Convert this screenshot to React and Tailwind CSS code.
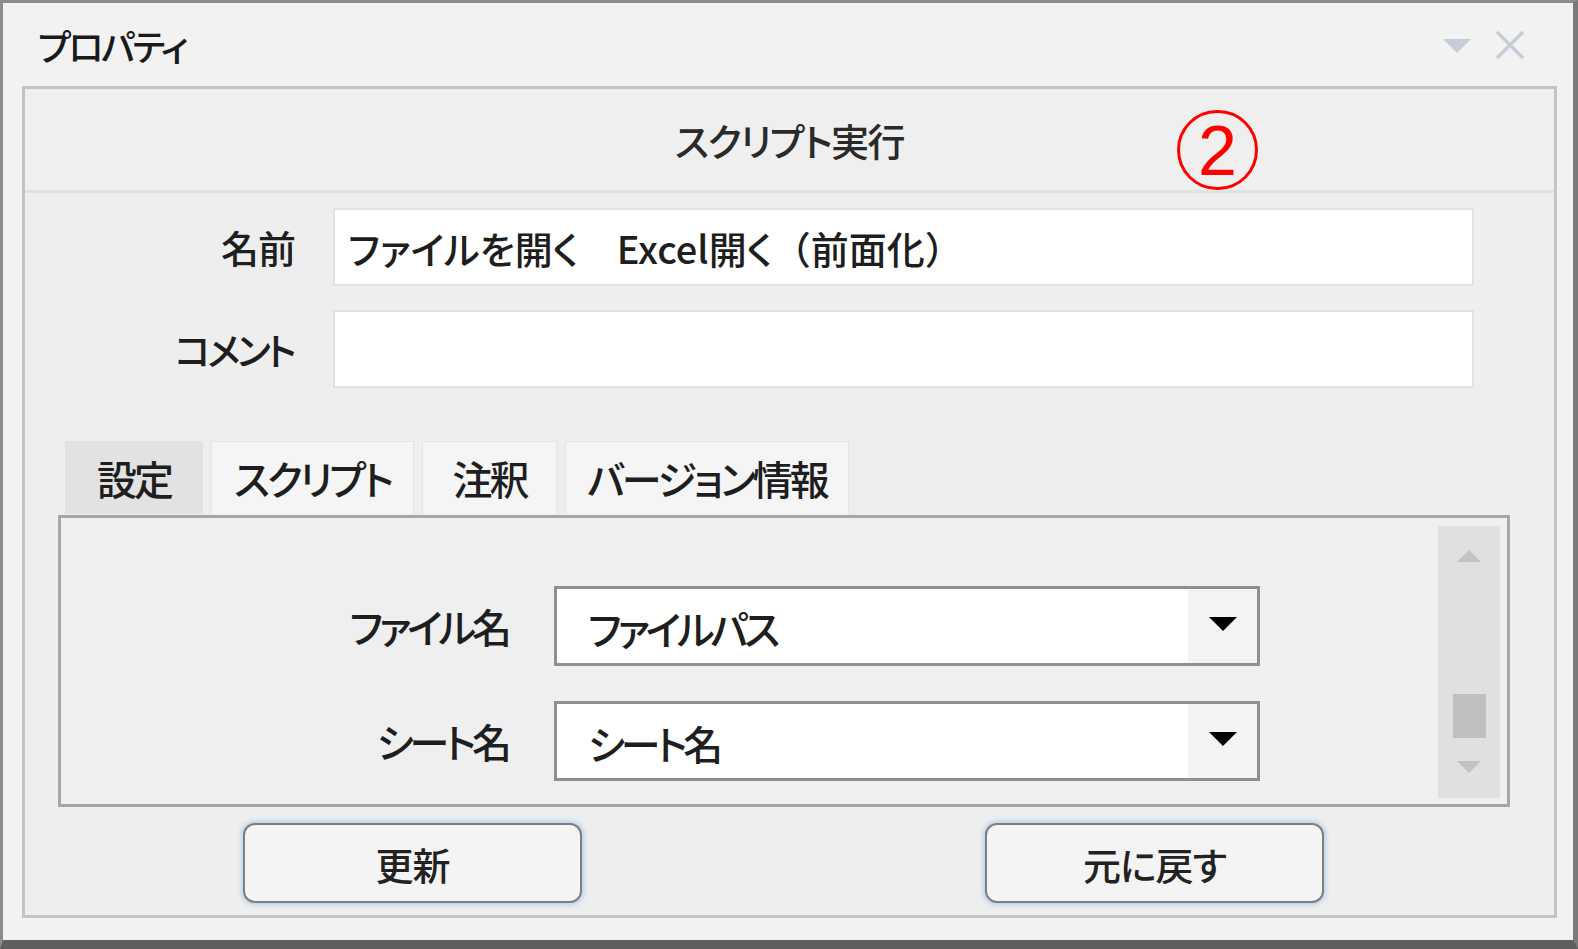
import React from "react";

const jp = "font-['Noto_Sans_CJK_JP','Noto_Sans',sans-serif] [font-feature-settings:'palt'] font-medium";

const tabs = [
    {name: '設定', w: 'w-[138px]', active: true},
    {name: 'スクリプト', w: 'w-[203px]'},
    {name: '注釈', w: 'w-[135px]'},
    {name: 'バージョン情報', w: 'w-[284px]'},
];

function Caret({color = '#000', w = 28, h = 14, up = false}) {
    return (
        <svg width={w} height={h} viewBox={`0 0 ${w} ${h}`}>
            {up
                ? <path d={`M0 ${h} H${w} L${w / 2} 0 Z`} fill={color}/>
                : <path d={`M0 0 H${w} L${w / 2} ${h} Z`} fill={color}/>}
        </svg>
    );
}

function Field({label, children, tight}) {
    return (
        <div className="flex items-center">
            <div className={'w-[270px] text-right text-[38px] leading-none text-[#1e1e1e] ' +
                (tight ? 'tracking-[-3.5px] pr-[2px]' : 'tracking-[-1px]')}>{label}</div>
            <div className="ml-[38px] w-[1141px] h-[78px] bg-white border-2 border-[#e2e2e2] flex items-center pl-[13px] text-[38px] text-[#1e1e1e] whitespace-nowrap">
                {children}
            </div>
        </div>
    );
}

function Combo({label, value}) {
    return (
        <div className="flex items-center">
            <div className="w-[451px] text-right text-[40px] leading-none text-[#1e1e1e] tracking-[-4px] pr-[4px]">{label}</div>
            <div className="ml-[42px] w-[706px] h-[80px] border-[3px] border-[#8f8f8f] bg-white flex">
                <div className="flex-1 flex items-center pl-[31px] text-[40px] text-[#1e1e1e] tracking-[-4px] pt-[4px]">{value}</div>
                <div className="w-[69px] bg-[#f3f3f3] flex items-center justify-center pb-[4px]">
                    <Caret/>
                </div>
            </div>
        </div>
    );
}

function Button({children}) {
    return (
        <div className="w-[339px] h-[80px] rounded-[12px] border-2 border-[#7f7f7f] bg-[#f4f4f4] shadow-[0_0_4px_2px_rgba(140,185,235,0.55)] flex items-center justify-center text-[38px] text-[#222] tracking-[-1px]">
            {children}
        </div>
    );
}

export default function App() {
    return (
        <div className={"w-[1578px] h-[949px] bg-[#f2f2f2] border-t-[3px] border-l-[3px] border-r-[5px] border-b-[9px] border-[#8c8c8c] border-b-[#5e5e5e] border-r-[#7a7a7a] flex flex-col " + jp}>
            {/* title bar */}
            <div className="h-[83px] flex items-center justify-between pl-[35px] pr-[48px]">
                <span className="text-[36px] text-[#1a1a1a] leading-none tracking-[-2.5px]">プロパティ</span>
                <div className="flex items-center gap-[24px]">
                    <div className="mt-[2px]"><Caret color="#c6ccd8" w={28} h={14}/></div>
                    <svg width="30" height="30" viewBox="0 0 30 30">
                        <path d="M2 2 L28 28 M28 2 L2 28" stroke="#c6ccd8" strokeWidth="3.5" fill="none"/>
                    </svg>
                </div>
            </div>

            {/* main panel */}
            <div className="ml-[19px] w-[1535px] h-[832px] border-[3px] border-[#c4c4c4] bg-[#eeeeee] flex flex-col">
                <div className="relative h-[104px] bg-[#efefef] border-b-[3px] border-[#e1e1e1] flex items-center justify-center">
                    <span className="text-[38px] text-[#2a2a2a] leading-none tracking-[-1.5px]">スクリプト実行</span>
                    <div className="absolute left-[1152px] top-[21px] w-[81px] h-[80px] rounded-full border-[3px] border-[#ff0000] flex items-center justify-center">
                        <span className="font-['Liberation_Sans',sans-serif] text-[70px] leading-none text-[#ff0000] mt-[2px]">2</span>
                    </div>
                </div>

                <div className="mt-[15px] flex flex-col gap-[24px]">
                    <Field label="名前">
                        ファイルを開く　Excel開く<span className="[font-feature-settings:normal]">（前面化）</span>
                    </Field>
                    <Field label="コメント" tight/>
                </div>

                {/* tabs */}
                <div className="mt-[53px] ml-[40px] flex gap-[8px] h-[74px]">
                    {tabs.map((t) => (
                        <div key={t.name}
                             className={t.w + ' h-[73px] flex items-center justify-center text-[40px] text-[#1e1e1e] tracking-[-3px] ' +
                                 (t.active ? 'bg-[#e2e2e2]' : 'bg-[#f5f5f5] border border-[#e4e4e4] border-b-0')}>
                            {t.name}
                        </div>
                    ))}
                </div>

                <div className="ml-[33px] w-[1452px] h-[292px] border-[3px] border-[#a6a6a6] bg-[#efefef] flex">
                    <div className="flex-1 pt-[68px] flex flex-col gap-[35px]">
                        <Combo label="ファイル名" value="ファイルパス"/>
                        <Combo label="シート名" value="シート名"/>
                    </div>
                    <div className="mt-[8px] mb-[6px] mr-[7px] w-[62px] bg-[#e0e0e0] flex flex-col items-center">
                        <div className="mt-[24px]"><Caret color="#c3c3c3" w={24} h={12} up/></div>
                        <div className="mt-[132px] w-[33px] h-[44px] bg-[#bfbfbf]"></div>
                        <div className="mt-[23px]"><Caret color="#c3c3c3" w={24} h={12}/></div>
                    </div>
                </div>

                <div className="mt-[16px] pl-[218px] flex gap-[403px]">
                    <Button>更新</Button>
                    <Button>元に戻す</Button>
                </div>
            </div>
        </div>
    );
}
